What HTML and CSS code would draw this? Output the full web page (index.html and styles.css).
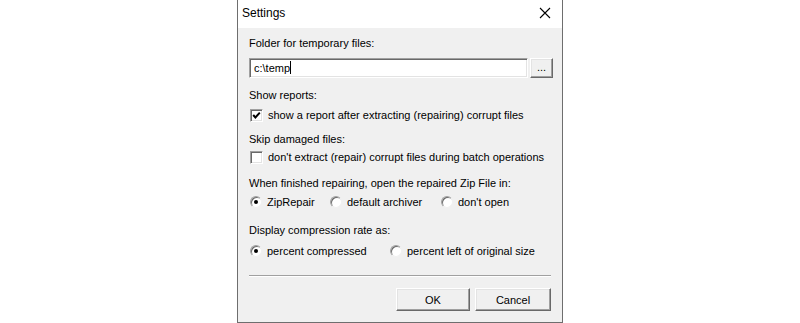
FILE: index.html
```html
<!DOCTYPE html>
<html>
<head>
  <title>Settings</title>
  <link rel="stylesheet" href="styles.css">
</head>
<body>
  <!-- Settings dialog -->
  <div class="dialog">
    <div class="titlebar">
      <span class="title">Settings</span>
      <span class="close-button">
        <svg width="12" height="12" viewBox="0 0 12 12"><path d="M1 1 L11 11 M11 1 L1 11" stroke="#000" stroke-width="1.1" fill="none"/></svg>
      </span>
    </div>

    <div class="content">
      <div class="label first">Folder for temporary files:</div>
      <div class="folder-row">
        <div class="text-input">c:\temp<span class="caret"></span></div>
        <div class="btn browse">...</div>
      </div>

      <div class="label group">Show reports:</div>
      <div class="option-row">
        <span class="checkbox">
          <svg width="9" height="9" viewBox="0 0 9 9"><path d="M1.2 4 L3.4 6.4 L7.8 1.6" stroke="#000" stroke-width="2" fill="none"/></svg>
        </span>
        <span>show a report after extracting (repairing) corrupt files</span>
      </div>

      <div class="label group">Skip damaged files:</div>
      <div class="option-row tight">
        <span class="checkbox"></span>
        <span>don't extract (repair) corrupt files during batch operations</span>
      </div>

      <div class="label group wide">When finished repairing, open the repaired Zip File in:</div>
      <div class="option-row radios-open">
        <span class="radio-item zip"><span class="radio on"></span>ZipRepair</span>
        <span class="radio-item archiver"><span class="radio"></span>default archiver</span>
        <span class="radio-item"><span class="radio"></span>don't open</span>
      </div>

      <div class="label group wider">Display compression rate as:</div>
      <div class="option-row radios-rate">
        <span class="radio-item compressed"><span class="radio on"></span>percent compressed</span>
        <span class="radio-item"><span class="radio"></span>percent left of original size</span>
      </div>

      <div class="separator"></div>

      <div class="button-row">
        <div class="btn ok">OK</div>
        <div class="btn cancel">Cancel</div>
      </div>
    </div>
  </div>
</body>
</html>
```

FILE: styles.css
```css
/* Classic Windows dialog look */
body {
  margin: 0;
  background-color: #fff;
  font-family: 'Liberation Sans', Arial, sans-serif;
  font-size: 11px;
  color: #000;
}

.dialog {
  width: 326px;
  height: 323px;
  box-sizing: border-box;
  margin: 0 auto;
  border: 1px solid #6e6e6e;
  border-top: none;
  background-color: #f0f0f0;
}

.titlebar {
  height: 28px;
  background-color: #fff;
  display: flex;
  align-items: center;
  justify-content: space-between;
  padding: 0 11px 0 4px;
}

.title {
  font-size: 12px;
  margin-top: -2px;
}

.close-button {
  display: flex;
  margin-top: -2px;
}

.content {
  padding: 0 11px 0 11px;
}

.label {
  line-height: 14px;
  margin-top: 10px;
}

.label.first {
  margin-top: 8px;
}

.label.wide {
  margin-top: 12px;
}

.label.wider {
  margin-top: 14px;
}

.folder-row {
  display: flex;
  gap: 2px;
  margin-top: 8px;
  margin-right: -2px;
  height: 20px;
}

.text-input {
  flex: 1;
  box-sizing: border-box;
  height: 20px;
  background-color: #fff;
  border: 1px solid;
  border-color: #a0a0a0 #fff #fff #a0a0a0;
  box-shadow: inset 1px 1px 0 #696969, inset -1px -1px 0 #e3e3e3;
  padding: 2px 0 0 4px;
  line-height: 14px;
}

.caret {
  display: inline-block;
  width: 1px;
  height: 13px;
  background-color: #000;
  vertical-align: -2px;
}

.btn {
  box-sizing: border-box;
  display: flex;
  align-items: center;
  justify-content: center;
  background-color: #f0f0f0;
  border: 1px solid;
  border-color: #fff #696969 #696969 #fff;
  box-shadow: inset -1px -1px 0 #a0a0a0, inset 1px 1px 0 #e3e3e3;
}

.browse {
  width: 23px;
  height: 20px;
  padding-bottom: 2px;
}

.option-row {
  display: flex;
  align-items: center;
  line-height: 14px;
  margin-top: 6px;
}

.option-row.tight {
  margin-top: 4px;
}

.radios-open {
  margin-top: 5px;
}

.radios-rate {
  margin-top: 7px;
}

.checkbox {
  box-sizing: border-box;
  width: 13px;
  height: 13px;
  margin: 0 5px 0 1px;
  background-color: #fff;
  border: 1px solid;
  border-color: #a0a0a0 #fff #fff #a0a0a0;
  box-shadow: inset 1px 1px 0 #696969, inset -1px -1px 0 #e3e3e3;
  display: flex;
  align-items: center;
  justify-content: center;
}

.radio-item {
  display: flex;
  align-items: center;
}

.radio-item.zip {
  width: 80px;
}

.radio-item.archiver {
  width: 111px;
}

.radio-item.compressed {
  width: 140px;
}

.radio {
  box-sizing: border-box;
  width: 12px;
  height: 12px;
  margin: 0 5px 0 1px;
  border-radius: 50%;
  background-color: #fff;
  border: 1px solid;
  border-color: #a0a0a0 #f0f0f0 #f0f0f0 #a0a0a0;
  box-shadow: inset 1px 1px 0 #696969;
  position: relative;
}

.radio.on::after {
  content: "";
  position: absolute;
  left: 3px;
  top: 3px;
  width: 4px;
  height: 4px;
  border-radius: 50%;
  background-color: #000;
}

.separator {
  margin-top: 17px;
  height: 1px;
  background-color: #a0a0a0;
  border-bottom: 1px solid #fff;
}

.button-row {
  display: flex;
  justify-content: flex-end;
  gap: 5px;
  margin-top: 11px;
}

.ok {
  width: 74px;
  height: 23px;
}

.cancel {
  width: 76px;
  height: 23px;
}
```
